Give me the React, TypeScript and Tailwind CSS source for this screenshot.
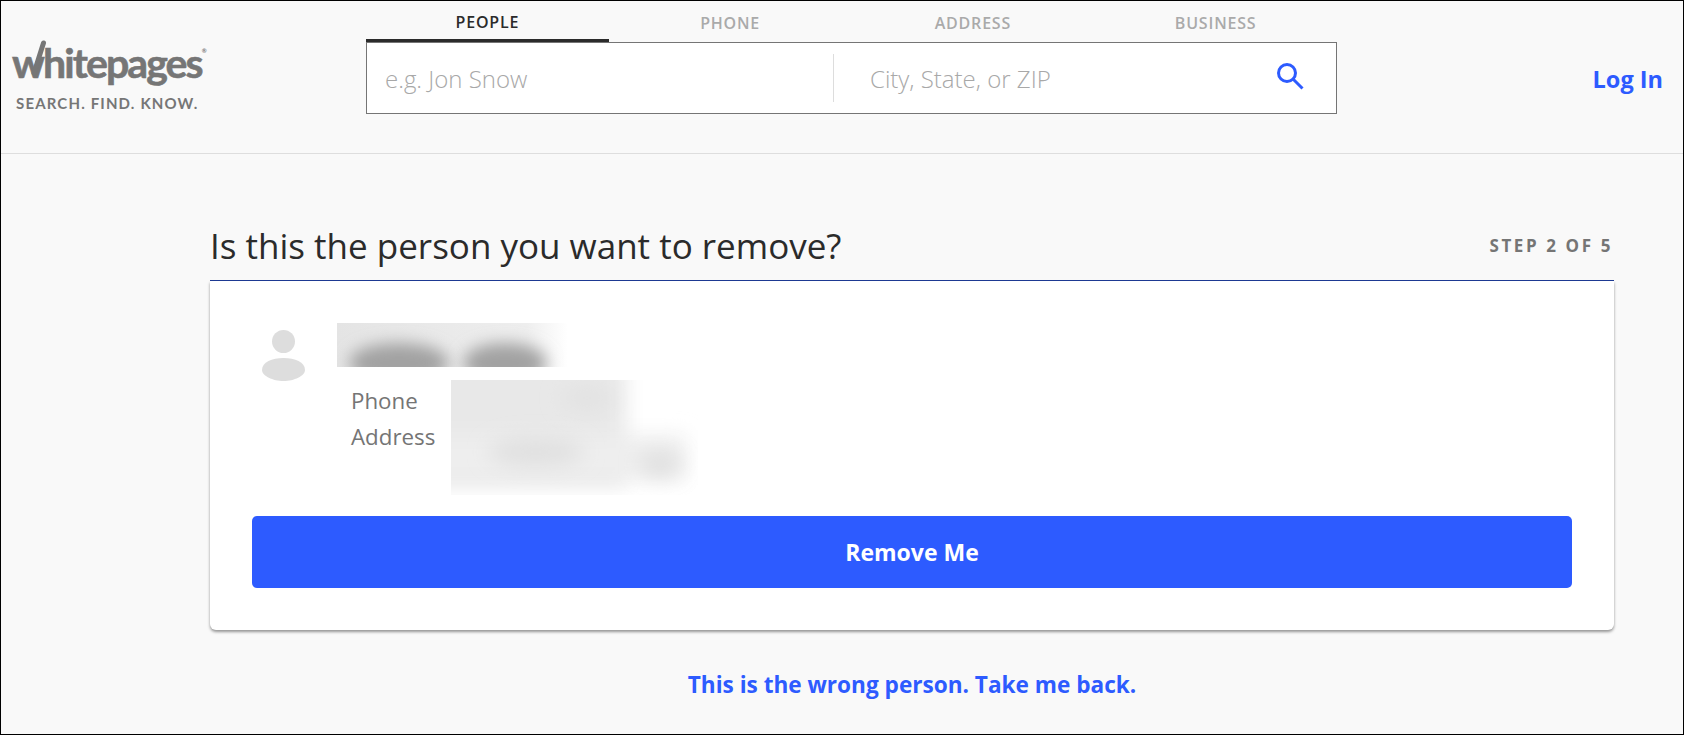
const sans = 'font-["Open_Sans",_"Noto_Sans",_sans-serif]';

function Logo() {
  return (
    <div className="relative w-[340px] pl-[11px] pt-[37px] shrink-0 select-none">
      <div className='font-["Lato",_sans-serif] font-bold lowercase text-[41px] leading-[50px] tracking-[-1.9px] text-[#767676] [-webkit-text-stroke:0.6px_#767676] h-[50px]'>
        Whitepages<sup className="text-[6px] tracking-normal align-[22px] leading-none [-webkit-text-stroke:0]">®</sup>
      </div>
      {/* tall stroke on the W */}
      <svg width="16" height="36" viewBox="0 0 16 36" className="absolute left-[30px] top-[39px]">
        <path d="M3 33L12.5 3" stroke="#767676" strokeWidth="5" strokeLinecap="round" />
      </svg>
      <div className='font-["Lato",_sans-serif] font-bold text-[15px] leading-[16px] tracking-[1.15px] text-[#767676] pl-[4px] mt-[7px]'>
        SEARCH. FIND. KNOW.
      </div>
    </div>
  );
}

function SearchIcon() {
  return (
    <svg width="27" height="27" viewBox="0 0 27 27" fill="none" stroke="#2d5bff" strokeWidth="3" className="block">
      <circle cx="10" cy="10" r="8.5" />
      <path d="M16 16l9.5 9.5" />
    </svg>
  );
}

function Filters() {
  return (
    <svg width="0" height="0" className="absolute">
      <filter id="b1" x="-100%" y="-200%" width="300%" height="500%">
        <feGaussianBlur stdDeviation="8" />
      </filter>
      <filter id="b2" x="-100%" y="-200%" width="300%" height="500%">
        <feGaussianBlur stdDeviation="10" />
      </filter>
    </svg>
  );
}

function NameBlur() {
  return (
    <svg width="231" height="44" viewBox="0 0 231 44" className="block">
      <defs>
        <linearGradient id="fade" x1="0" x2="1">
          <stop offset="0" stopColor="#e4e4e4" />
          <stop offset="0.82" stopColor="#eeeeee" />
          <stop offset="1" stopColor="#ffffff" />
        </linearGradient>
      </defs>
      <rect width="231" height="44" fill="url(#fade)" />
      <ellipse cx="62" cy="40" rx="50" ry="20" fill="#a2a2a2" filter="url(#b1)" />
      <ellipse cx="168" cy="40" rx="42" ry="20" fill="#a2a2a2" filter="url(#b1)" />
    </svg>
  );
}

function AddressBlur() {
  return (
    <svg width="247" height="115" viewBox="0 0 247 115" className="block">
      <rect width="247" height="115" fill="#ffffff" />
      <rect x="-30" y="-30" width="205" height="135" fill="#e8e8e8" filter="url(#b2)" />
      <rect x="-30" y="55" width="265" height="45" fill="#eeeeee" filter="url(#b2)" />
      <ellipse cx="136" cy="18" rx="26" ry="12" fill="#e2e2e2" filter="url(#b2)" />
      <ellipse cx="85" cy="72" rx="48" ry="14" fill="#e0e0e0" filter="url(#b2)" />
      <ellipse cx="209" cy="84" rx="20" ry="13" fill="#e0e0e0" filter="url(#b2)" />
    </svg>
  );
}

export default function App() {
  const tabs = ['PEOPLE', 'PHONE', 'ADDRESS', 'BUSINESS'];

  return (
    <div className={`h-[735px] bg-[#f9f9f9] border border-black overflow-hidden text-[#2b2b2b] ${sans}`}>
      <Filters />
      <header className="h-[153px] border-b border-[#dedede] flex">
        <div className="w-[365px] shrink-0">
          <Logo />
        </div>
        <div className="w-[971px] shrink-0 pt-[7px]">
          <div className="flex h-[34px]">
            {tabs.map((tab, i) => (
              <div
                key={tab}
                className={
                  i === 0
                    ? 'w-[243px] text-center text-[16px] font-semibold tracking-[0.8px] leading-[28px] border-b-[3px] border-[#2b2b2b]'
                    : 'w-[243px] text-center text-[16px] font-semibold tracking-[0.8px] leading-[31px] text-[#aaaaaa]'
                }
              >
                {tab}
              </div>
            ))}
          </div>
          <div className="h-[72px] border border-[#757575] bg-white flex items-center">
            <div className="w-[466px] pl-[18px] pt-[1px] text-[24px] text-[#a8a8a8] font-light">e.g. Jon Snow</div>
            <div className="w-px h-[48px] bg-[#dddddd]" />
            <div className="flex-1 pl-[36px] pt-[1px] text-[24px] text-[#a8a8a8] font-light">City, State, or ZIP</div>
            <div className="pr-[32px] pb-[3px]">
              <SearchIcon />
            </div>
          </div>
        </div>
        <div className="flex-1 flex justify-end pr-[20px] pt-[61px]">
          <a className="text-[23.5px] font-bold text-[#2d5bff] leading-[34px]">Log In</a>
        </div>
      </header>

      <main className="w-[1404px] ml-[209px]">
        <div className="h-[127px] flex items-end justify-between border-b border-[#1e3a94] pb-[12px]">
          <h1 className="text-[35px] font-medium leading-[44px]">Is this the person you want to remove?</h1>
          <div className="text-[17px] font-bold tracking-[2.6px] text-[#757575] pr-[1px] pb-[10px]">STEP 2 OF 5</div>
        </div>
        <div className="bg-white rounded-b-md shadow-[0_2px_3px_rgba(0,0,0,0.4)] px-[42px] pt-[42px] pb-[42px] h-[349px]">
          <div className="flex h-[193px]">
            <div className="w-[85px] pl-[10px] pt-[7px]">
              <svg width="43" height="51" viewBox="0 0 43 51" fill="#dddddd">
                <circle cx="21.5" cy="11.5" r="11.5" />
                <path d="M0 40C0 32 10 28 21.5 28S43 32 43 40C43 46 32 51 21.5 51S0 46 0 40Z" />
              </svg>
            </div>
            <div>
              <NameBlur />
              <div className="flex mt-[13px]">
                <div className="w-[114px] pl-[14px] pt-[3px] text-[22.3px] leading-[35.5px] text-[#757575]">
                  <div>Phone</div>
                  <div>Address</div>
                </div>
                <AddressBlur />
              </div>
            </div>
          </div>
          <button className="w-full h-[72px] pt-[1px] rounded-[5px] bg-[#2d5bff] text-white text-[23px] font-bold">Remove Me</button>
        </div>
        <div className="text-center pt-[37px] text-[22.6px] font-bold text-[#2d5bff] leading-[36px]">
          This is the wrong person. Take me back.
        </div>
      </main>
    </div>
  );
}
